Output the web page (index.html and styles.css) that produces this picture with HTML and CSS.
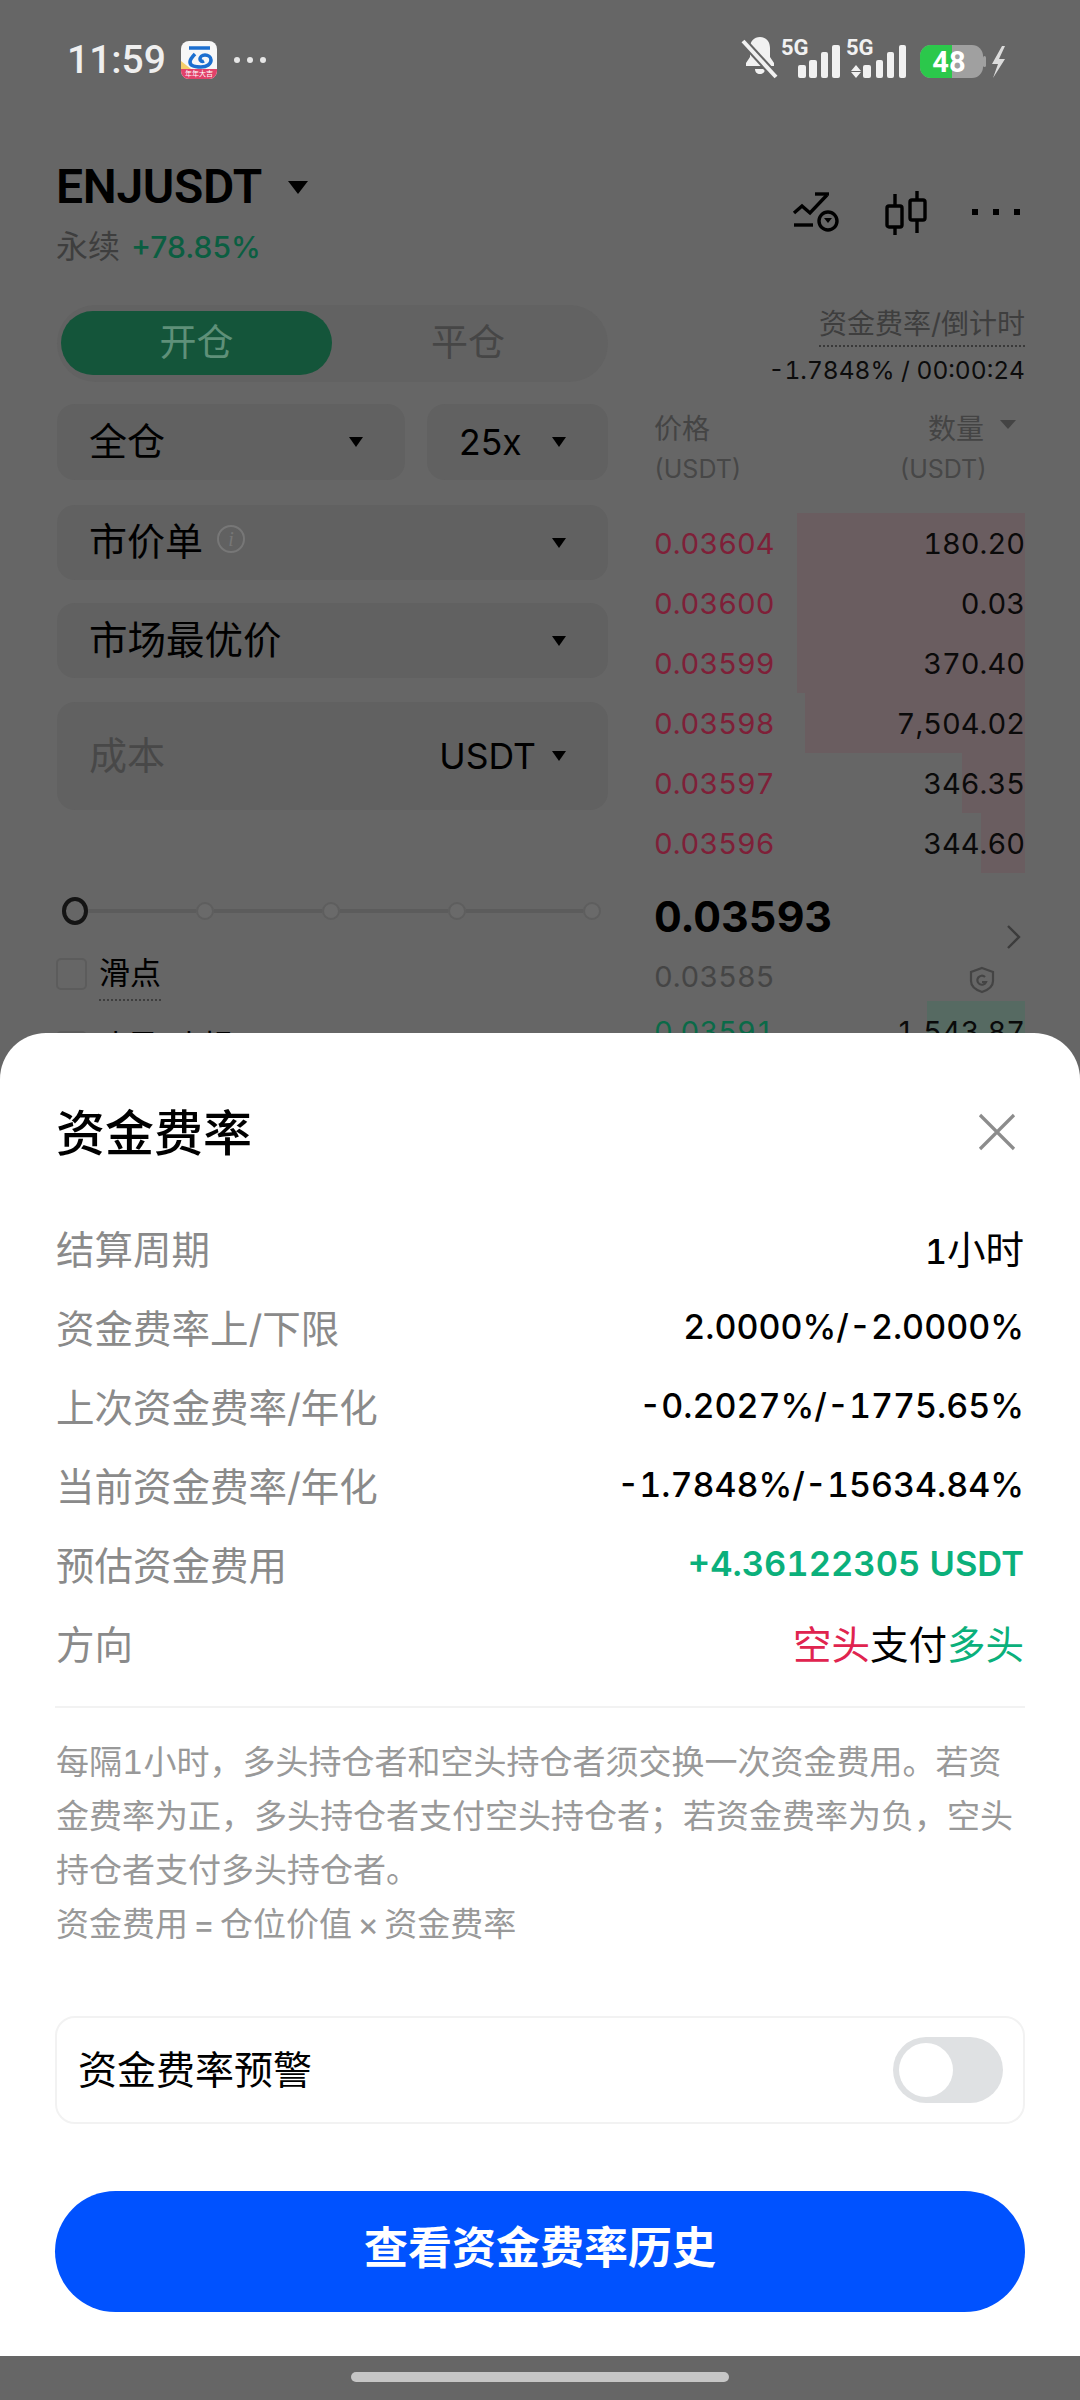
FILE: index.html
```html
<!DOCTYPE html>
<html lang="zh-CN">

<head>
  <meta charset="UTF-8">
  <meta name="viewport" content="width=device-width, initial-scale=1.0">
  <title>资金费率</title>
  <link rel="stylesheet" href="styles.css">
</head>

<body>
  <div class="page">
    <!-- 状态栏 -->
    <div class="status-bar">
      <div class="status-left">
        <span class="status-time">11:59</span>
        <span class="app-icon">
          <svg class="app-logo" width="36" height="28" viewBox="0 0 36 28" fill="none" stroke="#1c6fd0" stroke-width="3.6">
            <path d="M8 7h21" />
            <path d="M14 13c-3 3-5 6-5 8 0 4 6 5 11 5 6 0 10-3 10-7 0-3-3-5-6-5-3 0-5 2-5 4s2 3 4 2" />
            <path d="M0 28h10L0 20z" fill="#f5cf6a" stroke="none" />
          </svg>
          <span class="app-band">年年大吉</span>
        </span>
        <span class="status-dots"><i></i><i></i><i></i></span>
      </div>
      <svg class="status-icons" width="270" height="44" viewBox="0 0 270 44">
        <g fill="#f1f1f1">
          <path d="M22 2c6 0 10 4 10 11v9l4 6v3H8v-3l4-6v-9c0-7 4-11 10-11zM17 34h10c0 3-2 5-5 5s-5-2-5-5z" />
          <rect x="60" y="30" width="8" height="13" rx="2" />
          <rect x="71" y="25" width="8" height="18" rx="2" />
          <rect x="83" y="17" width="7" height="26" rx="2" />
          <rect x="94" y="10" width="8" height="33" rx="2" />
          <rect x="125" y="30" width="8" height="13" rx="2" />
          <rect x="138" y="25" width="7" height="18" rx="2" />
          <rect x="149" y="17" width="7" height="26" rx="2" />
          <rect x="161" y="10" width="7" height="33" rx="2" />
          <path d="M118 30l-5 6h10zM118 43l-5-6h10z" />
          <text class="net-label" x="43" y="20">5G</text>
          <text class="net-label" x="108" y="20">5G</text>
          <rect x="182" y="10" width="63" height="33" rx="11" fill="#a0a0a0" />
          <path d="M193 10h21v33h-21a11 11 0 0 1-11-11V21a11 11 0 0 1 11-11z" fill="#2bc84b" />
          <rect x="245" y="21" width="3" height="11" rx="1.5" fill="#a0a0a0" />
          <text class="battery-label" x="211" y="37">48</text>
          <path d="M264 11l-10 18h6l-5 14 12-19h-6l6-13z" fill="#dcdcdc" />
        </g>
        <path d="M5 6l33 36" stroke="#666" stroke-width="8" />
        <path d="M5 6l33 36" stroke="#f1f1f1" stroke-width="4" />
      </svg>
    </div>

    <!-- 标题 -->
    <div class="market-head">
      <div class="market-info">
        <div class="market-title">ENJUSDT <span class="caret caret-big"></span></div>
        <div class="market-sub">永续 <span class="market-change">+78.85%</span></div>
      </div>
      <div class="market-tools">
        <svg class="tool" width="48" height="44" viewBox="0 0 48 44" fill="none" stroke="#000" stroke-width="3.4">
          <path d="M2 23l8-7 8 7 17-18" />
          <path d="M23 4h14" />
          <path d="M2 35h19" />
          <circle cx="36" cy="31" r="9" />
          <path d="M32 28h8l-4 5z" fill="#000" stroke="none" />
        </svg>
        <svg class="tool" width="44" height="46" viewBox="0 0 44 46" fill="none" stroke="#000" stroke-width="3.4">
          <rect x="3" y="17" width="15" height="21" rx="2" />
          <path d="M11 5v12M11 38v8" />
          <rect x="26" y="11" width="15" height="20" rx="2" />
          <path d="M33 2v9M33 31v13" />
        </svg>
        <div class="tool-dots"><i></i><i></i><i></i></div>
      </div>
    </div>

    <div class="trade">
      <!-- 左侧下单 -->
      <div class="order-form">
        <div class="tabs">
          <div class="tab tab-active">开仓</div>
          <div class="tab">平仓</div>
        </div>
        <div class="select-row">
          <div class="select select-wide"><span>全仓</span><span class="caret"></span></div>
          <div class="select select-lever"><span class="select-num">25x</span><span class="caret"></span></div>
        </div>
        <div class="select select-order">
          <span class="select-label">市价单 <span class="info-icon">i</span></span><span class="caret"></span>
        </div>
        <div class="select select-price"><span>市场最优价</span><span class="caret"></span></div>
        <div class="select cost-input">
          <span class="cost-hint">成本</span>
          <span class="cost-unit"><span class="select-num">USDT</span><span class="caret"></span></span>
        </div>
        <div class="slider">
          <span class="slider-thumb"></span><span class="slider-line"></span>
          <span class="slider-node"></span><span class="slider-line"></span>
          <span class="slider-node"></span><span class="slider-line"></span>
          <span class="slider-node"></span><span class="slider-line slider-line-last"></span>
          <span class="slider-node"></span>
        </div>
        <div class="check-row">
          <span class="check-box"></span><span class="check-text">滑点</span>
        </div>
        <div class="check-row check-row-next">
          <span class="check-box"></span><span>止盈/止损</span>
        </div>
      </div>

      <!-- 右侧盘口 -->
      <div class="book">
        <div class="funding">
          <span class="funding-label">资金费率/倒计时</span>
          <span class="funding-value">-1.7848% / 00:00:24</span>
        </div>
        <div class="book-head">
          <div class="book-col">
            <span class="book-name">价格</span>
            <span class="book-unit">(USDT)</span>
          </div>
          <div class="book-col book-col-right">
            <span class="book-name">数量<span class="caret caret-soft"></span></span>
            <span class="book-unit book-unit-right">(USDT)</span>
          </div>
        </div>
        <div class="book-row"><span class="depth depth-ask" style="width: 228px"></span><span class="ask">0.03604</span><span class="qty">180.20</span></div>
        <div class="book-row"><span class="depth depth-ask" style="width: 228px"></span><span class="ask">0.03600</span><span class="qty">0.03</span></div>
        <div class="book-row"><span class="depth depth-ask" style="width: 228px"></span><span class="ask">0.03599</span><span class="qty">370.40</span></div>
        <div class="book-row"><span class="depth depth-ask" style="width: 220px"></span><span class="ask">0.03598</span><span class="qty">7,504.02</span></div>
        <div class="book-row"><span class="depth depth-ask" style="width: 63px"></span><span class="ask">0.03597</span><span class="qty">346.35</span></div>
        <div class="book-row"><span class="depth depth-ask" style="width: 44px"></span><span class="ask">0.03596</span><span class="qty">344.60</span></div>
        <div class="book-mid">
          <div class="mid-prices">
            <div class="mid-last">0.03593</div>
            <div class="mid-mark">0.03585</div>
          </div>
          <div class="mid-icons">
            <svg width="16" height="26" viewBox="0 0 16 26" fill="none" stroke="#3c3c3c" stroke-width="2.4"><path d="M2 2l11 11L2 24" /></svg>
            <svg class="mid-shield" width="26" height="28" viewBox="0 0 26 28" fill="none" stroke="#444" stroke-width="2.2">
              <path d="M13 2l11 4v9c0 6-5 9-11 11C7 24 2 21 2 15V6z" />
              <path d="M16 11a4.5 4.5 0 1 0 1 5h-4" />
            </svg>
          </div>
        </div>
        <div class="book-row"><span class="depth depth-bid" style="width: 98px"></span><span class="bid">0.03591</span><span class="qty">1,543.87</span></div>
      </div>
    </div>

    <!-- 资金费率弹层 -->
    <div class="sheet">
      <div class="sheet-head">
        <h2 class="sheet-title">资金费率</h2>
        <svg width="38" height="38" viewBox="0 0 38 38" fill="none" stroke="#8c8c8c" stroke-width="3.2"><path d="M2 2l34 34M36 2L2 36" /></svg>
      </div>
      <div class="info-list">
        <div class="info-row"><span class="info-key">结算周期</span><span class="info-val">1<span class="info-cjk">小时</span></span></div>
        <div class="info-row"><span class="info-key">资金费率上/下限</span><span class="info-val">2.0000%/-2.0000%</span></div>
        <div class="info-row"><span class="info-key">上次资金费率/年化</span><span class="info-val">-0.2027%/-1775.65%</span></div>
        <div class="info-row"><span class="info-key">当前资金费率/年化</span><span class="info-val">-1.7848%/-15634.84%</span></div>
        <div class="info-row"><span class="info-key">预估资金费用</span><span class="info-val text-up info-strong">+4.36122305 USDT</span></div>
        <div class="info-row"><span class="info-key">方向</span><span class="info-val info-cjk"><span class="text-down">空头</span>支付<span class="text-up">多头</span></span></div>
      </div>
      <p class="note">每隔1小时，多头持仓者和空头持仓者须交换一次资金费用。若资金费率为正，多头持仓者支付空头持仓者；若资金费率为负，空头持仓者支付多头持仓者。</p>
      <p class="note note-formula">资金费用 = 仓位价值 × 资金费率</p>
      <div class="alert-card">
        <span class="alert-text">资金费率预警</span>
        <span class="switch"><span class="switch-knob"></span></span>
      </div>
      <div class="history-btn">查看资金费率历史</div>
    </div>

    <div class="nav-bar"><span class="nav-pill"></span></div>
  </div>
</body>

</html>
```

FILE: styles.css
```css
* {
  box-sizing: border-box;
}

body,
h2,
p {
  padding: 0;
  margin: 0;
}

body {
  font-family: Inter, "Noto Sans CJK SC", sans-serif;
  color: #000;
}

.page {
  position: relative;
  overflow: hidden;
  width: 1080px;
  height: 2400px;
  background: #666;
}

/* 状态栏 */
.status-bar {
  display: flex;
  justify-content: space-between;
  align-items: center;
  height: 120px;
  padding: 0 72px 0 67px;
}

.status-left {
  display: flex;
  align-items: center;
}

.status-time {
  width: 114px;
  font-family: Roboto, sans-serif;
  font-size: 39px;
  font-weight: 500;
  color: #efefef;
}

.app-icon {
  display: flex;
  flex-direction: column;
  overflow: hidden;
  width: 36px;
  height: 38px;
  border-radius: 8px;
  background: #f7f7f7;
}

.app-logo {
  display: block;
  flex: none;
}

.app-band {
  height: 10px;
  text-align: center;
  white-space: nowrap;
  font-size: 7px;
  line-height: 10px;
  color: #fff;
  background: #e2426a;
}

.status-dots {
  display: flex;
  gap: 7px;
  margin-left: 17px;
}

.status-dots i {
  width: 6px;
  height: 6px;
  border-radius: 50%;
  background: #e6e6e6;
}

.status-icons {
  margin-top: -6px;
}

.net-label {
  font-family: Roboto, sans-serif;
  font-size: 22px;
  font-weight: 700;
}

.battery-label {
  font-family: Roboto, sans-serif;
  font-size: 29px;
  font-weight: 700;
  fill: #fff;
  text-anchor: middle;
}

/* 标题 */
.market-head {
  display: flex;
  justify-content: space-between;
  height: 185px;
  padding: 37px 60px 0 56px;
}

.market-title {
  display: flex;
  align-items: center;
  gap: 26px;
  height: 60px;
  font-family: Roboto, sans-serif;
  font-size: 48px;
  font-weight: 600;
  line-height: 60px;
  letter-spacing: -0.3px;
}

.market-sub {
  margin-top: 10px;
  font-size: 32px;
  line-height: 40px;
  color: #3e3e3e;
}

.market-change {
  margin-left: 2px;
  font-size: 30px;
  font-weight: 500;
  color: #0b5e41;
}

.market-tools {
  display: flex;
  align-items: center;
  gap: 44px;
  height: 110px;
}

.tool-dots {
  display: flex;
  gap: 15px;
}

.tool-dots i {
  width: 6px;
  height: 6px;
  background: #000;
}

.caret {
  display: inline-block;
  width: 0;
  height: 0;
  border-style: solid;
  border-width: 10px 7px 0;
  border-color: #000 transparent transparent;
}

.caret-big {
  border-width: 13px 10px 0;
}

.caret-soft {
  margin-left: 16px;
  margin-bottom: 6px;
  border-width: 9px 8px 0;
  border-top-color: #444;
}

/* 下单区 */
.trade {
  display: flex;
  gap: 46px;
  padding: 0 55px 0 57px;
}

.order-form {
  width: 551px;
  flex: none;
}

.tabs {
  display: flex;
  height: 77px;
  padding: 6px 4px 7px;
  border-radius: 39px;
  background: #626262;
}

.tab {
  flex: 1;
  text-align: center;
  font-size: 37px;
  line-height: 64px;
  color: #464646;
}

.tab-active {
  flex: none;
  width: 271px;
  border-radius: 32px;
  color: #5f9079;
  background: #14553a;
}

.select-row {
  display: flex;
  gap: 22px;
  margin-top: 22px;
}

.select {
  display: flex;
  justify-content: space-between;
  align-items: center;
  height: 75px;
  padding: 0 42px 0 32px;
  border-radius: 18px;
  font-size: 38px;
  background: #616161;
}

.select > span:first-child {
  margin-bottom: 8px;
}

.select-lever > span:first-child,
.cost-unit > .select-num {
  margin-bottom: 0;
}

.select-wide {
  width: 348px;
  height: 76px;
}

.select-lever {
  width: 181px;
  height: 76px;
}

.select-num {
  font-size: 35.5px;
}

.select-order {
  margin-top: 25px;
}

.select-price {
  margin-top: 23px;
  font-size: 38.5px;
}

.select-label {
  display: flex;
  align-items: center;
  gap: 14px;
}

.info-icon {
  width: 28px;
  height: 28px;
  border: 2px solid #777;
  border-radius: 50%;
  text-align: center;
  font-family: "Liberation Serif", serif;
  font-size: 20px;
  font-style: italic;
  line-height: 24px;
  color: #777;
}

.cost-input {
  height: 108px;
  margin-top: 24px;
}

.cost-hint {
  color: #484848;
}

.cost-unit {
  display: flex;
  align-items: center;
  gap: 16px;
}

.slider {
  display: flex;
  align-items: center;
  height: 30px;
  margin: 86px 0 0 5px;
}

.slider-thumb {
  width: 26px;
  height: 28px;
  border: 4px solid #141414;
  border-radius: 50%;
}

.slider-node {
  width: 18px;
  height: 18px;
  border: 2px solid #5e5e5e;
  border-radius: 50%;
  background: #6a6a6a;
}

.slider-line {
  width: 108px;
  height: 4px;
  background: #5c5c5c;
}

.slider-line-last {
  width: 117px;
}

.check-row {
  display: flex;
  align-items: flex-start;
  gap: 12px;
  height: 42px;
  margin: 30px 0 0 -1px;
  font-size: 31px;
  line-height: 34px;
}

.check-box {
  width: 31px;
  height: 32px;
  margin-top: 2px;
  border: 2px solid #5c5c5c;
  border-radius: 5px;
}

.check-text {
  height: 45px;
  border-bottom: 2px dotted #3e3e3e;
}

.check-row-next {
  margin-top: 31px;
}

/* 盘口 */
.book {
  flex: 1;
  font-variant-numeric: tabular-nums;
}

.funding {
  display: flex;
  flex-direction: column;
  align-items: flex-end;
}

.funding-label {
  height: 42px;
  border-bottom: 2px dotted #3a3a3a;
  font-size: 28px;
  line-height: 38px;
  color: #3e3e3e;
}

.funding-value {
  margin-top: 6px;
  font-size: 24.5px;
  line-height: 34px;
  color: #0c0c0c;
}

.book-head {
  display: flex;
  justify-content: space-between;
  height: 126px;
  padding-top: 20px;
}

.book-col {
  display: flex;
  flex-direction: column;
  gap: 2px;
}

.book-col-right {
  align-items: flex-end;
}

.book-name {
  display: flex;
  align-items: center;
  height: 40px;
  padding-right: 9px;
  font-size: 28px;
  color: #444;
}

.book-unit {
  height: 40px;
  font-size: 25px;
  line-height: 40px;
  color: #474747;
}

.book-unit-right {
  margin-right: 38px;
}

.book-row {
  position: relative;
  display: flex;
  justify-content: space-between;
  align-items: center;
  height: 60px;
  font-size: 29px;
}

.depth {
  position: absolute;
  top: 0;
  right: 0;
  bottom: 0;
}

.depth-ask {
  background: #6a5d60;
}

.depth-bid {
  background: #566a62;
}

.ask,
.bid,
.qty {
  position: relative;
}

.ask {
  color: #7e2038;
}

.bid {
  color: #0b6a48;
}

.qty {
  color: #0a0a0a;
}

.book-mid {
  display: flex;
  justify-content: space-between;
  height: 115px;
  margin-top: 13px;
}

.mid-last {
  font-size: 43px;
  font-weight: 700;
  line-height: 60px;
}

.mid-mark {
  margin-top: 9px;
  font-size: 29px;
  line-height: 44px;
  color: #454545;
}

.mid-icons {
  display: flex;
  flex-direction: column;
  align-items: flex-end;
  gap: 16px;
  padding: 38px 3px 0 0;
}

.mid-shield {
  margin-right: 27px;
}

/* 弹层 */
.sheet {
  position: absolute;
  top: 1033px;
  left: 0;
  width: 100%;
  height: 1323px;
  padding: 0 55px;
  border-radius: 46px 46px 0 0;
  background: #fff;
}

.sheet-head {
  display: flex;
  justify-content: space-between;
  align-items: center;
  height: 193px;
  padding: 0 9px 0 1px;
}

.sheet-title {
  font-size: 49px;
  font-weight: 500;
}

.sheet-head svg {
  margin-top: 4px;
}

.info-list {
  display: flex;
  flex-direction: column;
  gap: 15px;
  height: 493px;
  margin-top: -11px;
  padding: 0 1px;
  border-bottom: 2px solid #f2f2f2;
}

.info-row {
  display: flex;
  justify-content: space-between;
  align-items: center;
  height: 64px;
}

.info-key {
  font-size: 38.5px;
  color: #8a8a8a;
}

.info-val {
  font-size: 34px;
  font-weight: 500;
  font-variant-numeric: tabular-nums;
}

.info-strong {
  font-size: 34.5px;
  font-weight: 600;
}

.info-cjk {
  font-size: 38.5px;
  font-weight: 400;
}

.text-up {
  color: #0bb07b;
}

.text-down {
  color: #e0244f;
}

.note {
  padding-left: 1px;
  font-size: 33px;
  line-height: 54px;
  color: #999;
  font-variant-numeric: tabular-nums;
}

.info-list + .note {
  margin-top: 27px;
}

.note-formula {
  word-spacing: -3.5px;
}

.alert-card {
  display: flex;
  justify-content: space-between;
  align-items: center;
  height: 108px;
  margin-top: 65px;
  padding: 0 20px 0 21px;
  border: 2px solid #f2f2f2;
  border-radius: 20px;
  font-size: 39px;
}

.alert-text {
  margin-bottom: 7px;
}

.switch {
  display: flex;
  align-items: center;
  width: 110px;
  height: 66px;
  padding-left: 6px;
  border-radius: 33px;
  background: #dfe1e3;
}

.switch-knob {
  width: 54px;
  height: 54px;
  border-radius: 50%;
  background: #fff;
}

.history-btn {
  height: 121px;
  margin-top: 67px;
  border-radius: 61px;
  text-align: center;
  font-size: 44px;
  font-weight: 700;
  line-height: 114px;
  color: #fff;
  background: #0052ff;
}

.nav-bar {
  position: absolute;
  left: 0;
  bottom: 0;
  display: flex;
  justify-content: center;
  width: 100%;
  height: 44px;
  padding-top: 16px;
}

.nav-pill {
  width: 378px;
  height: 10px;
  border-radius: 5px;
  background: #c6c6c6;
}
```
